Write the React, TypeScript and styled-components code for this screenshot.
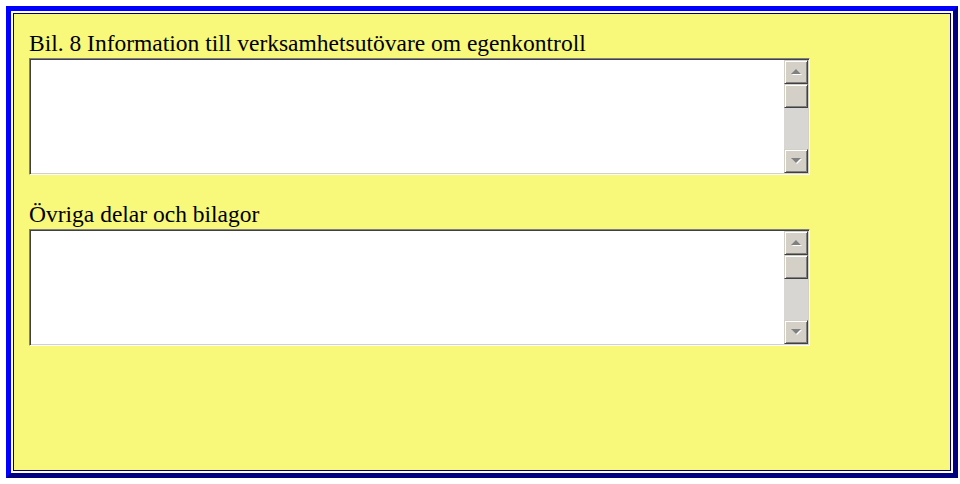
import React from 'react';
import styled, { createGlobalStyle } from 'styled-components';

const GlobalStyle = createGlobalStyle`
  html, body {
    margin: 0;
    padding: 0;
    background: #ffffff;
  }
  body {
    font-family: "Liberation Serif", "Times New Roman", serif;
  }
`;

const Page = styled.div`
  padding: 6px 0 0 6px;
`;

// outset table border with white cellspacing around the single cell
const Frame = styled.div`
  width: 952px;
  height: 472px;
  box-sizing: border-box;
  border: 5px solid;
  border-color: #0000ff #000080 #000080 #0000ff;
  padding: 2px;
  background: #ffffff;
`;

const Cell = styled.div`
  height: 100%;
  box-sizing: border-box;
  border: 1px solid #000080;
  background: #f8f87a;
  padding: 16px 0 0 15px;
`;

const Label = styled.div<{ $gap?: number }>`
  margin: ${(p) => p.$gap ?? 0}px 0 0 0;
  font-size: 23.5px;
  line-height: 26px;
  color: #000000;
  white-space: nowrap;
`;

const Field = styled.div`
  margin-top: 2px;
  width: 781px;
  height: 117px;
  box-sizing: border-box;
  display: flex;
  border: 1px solid;
  border-color: #808080 #ffffff #ffffff #808080;
  box-shadow: inset 1px 1px 0 #404040, inset -1px -1px 0 #d4d0c8;
  background: #ffffff;
  padding: 1px;
`;

const Input = styled.textarea`
  flex: 1;
  border: none;
  outline: none;
  resize: none;
  overflow: hidden;
  margin: 0;
  padding: 2px;
  background: #ffffff;
  font-family: "Liberation Mono", monospace;
  font-size: 13px;
`;

const ScrollBar = styled.div`
  width: 24px;
  display: flex;
  flex-direction: column;
  background: #d8d6d2;
`;

const Knob = styled.div`
  height: 24px;
  box-sizing: border-box;
  display: flex;
  align-items: center;
  justify-content: center;
  background: #d4d0c8;
  border: 1px solid;
  border-color: #d4d0c8 #404040 #404040 #d4d0c8;
  box-shadow: inset 1px 1px 0 #ffffff, inset -1px -1px 0 #808080;
`;

const Track = styled.div`
  flex: 1;
`;

function Arrow({ down }: { down?: boolean }) {
  const pts = down ? '0,0 10,0 5,5' : '5,0 10,5 0,5';
  return (
    <svg width="11" height="6" viewBox="0 0 11 6">
      <polygon points={pts} fill="#ffffff" transform="translate(1,1)" />
      <polygon points={pts} fill="#808080" />
    </svg>
  );
}

function TextBox() {
  return (
    <Field>
      <Input />
      <ScrollBar>
        <Knob>
          <Arrow />
        </Knob>
        <Knob />
        <Track />
        <Knob>
          <Arrow down />
        </Knob>
      </ScrollBar>
    </Field>
  );
}

export default function App() {
  return (
    <Page>
      <GlobalStyle />
      <Frame>
        <Cell>
          <Label>Bil. 8 Information till verksamhetsutövare om egenkontroll</Label>
          <TextBox />
          <Label $gap={26}>Övriga delar och bilagor</Label>
          <TextBox />
        </Cell>
      </Frame>
    </Page>
  );
}
